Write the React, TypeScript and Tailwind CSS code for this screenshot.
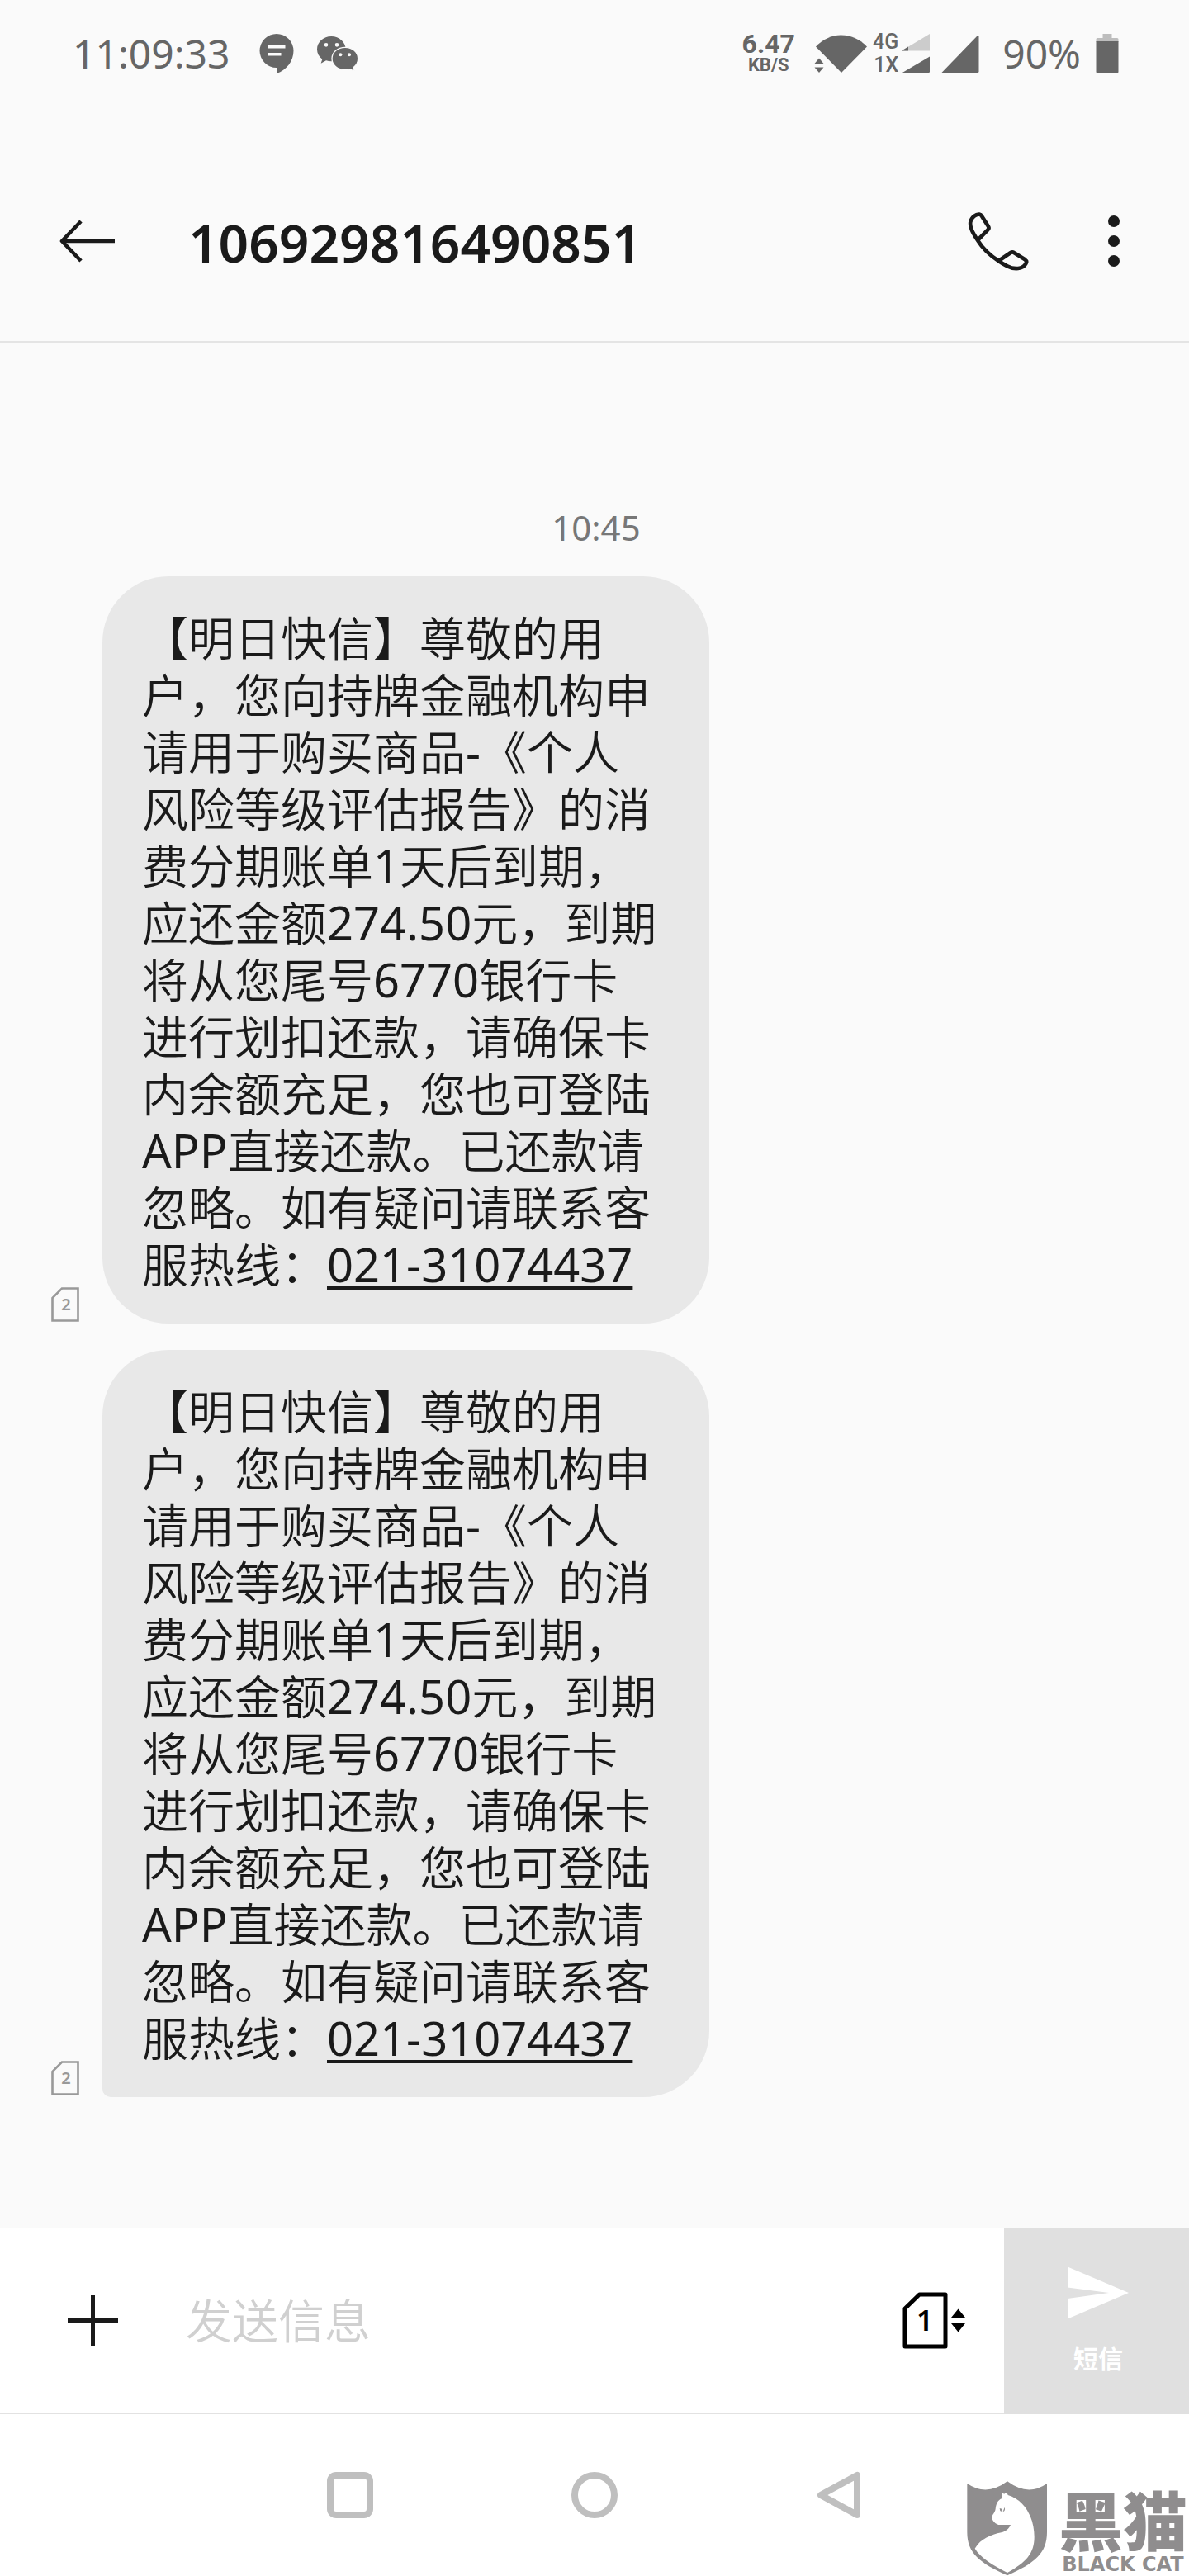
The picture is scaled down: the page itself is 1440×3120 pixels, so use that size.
import { type ReactNode } from "react";

const messages = [
  { id: 1, sim: 2, phone: "021-31074437", last: false },
  { id: 2, sim: 2, phone: "021-31074437", last: true },
];

const body =
  "【明日快信】尊敬的用户，您向持牌金融机构申请用于购买商品-《个人风险等级评估报告》的消费分期账单1天后到期，应还金额274.50元，到期将从您尾号6770银行卡进行划扣还款，请确保卡内余额充足，您也可登陆APP直接还款。已还款请忽略。如有疑问请联系客服热线：";

function StatusBar() {
  return (
    <div className="flex h-[130px] items-center justify-between pl-[88px] pr-[85px] text-[#666666]">
      <div className="flex items-center">
        <span className="text-[48px] leading-[64px]">11:09:33</span>
        <svg className="ml-9 h-12 w-[42px]" viewBox="0 0 42 48" fill="currentColor" aria-hidden="true">
          <path d="M21 0a20.500 20.500 0 0 0 0 41v7c12-4 20.500-15 20.500-27.500A20.500 20.500 0 0 0 21 0z" />
          <path d="M10.500 14h21v3.500h-21zM10.500 23h16v3.500h-16z" fill="#fafafa" />
        </svg>
        <svg className="ml-7 h-[42px] w-[50px]" viewBox="0 0 150 126" fill="currentColor" aria-hidden="true">
          <path d="M52 0C23 0 0 21 0 47c0 15 7 27 19 36l-5 15 19-10c6 2 12 3 19 3 29 0 52-19 52-44S81 0 52 0z" />
          <path
            d="M102 40c-27 0-48 18-48 41s21 41 48 41c6 0 12-1 17-3l17 8-4-14c11-8 17-19 17-32 0-23-20-41-47-41z"
            stroke="#fafafa"
            strokeWidth="4"
          />
          <g fill="#fafafa">
            <circle cx="33" cy="31" r="7" />
            <circle cx="72" cy="31" r="7" />
            <circle cx="85" cy="67" r="6" />
            <circle cx="117" cy="67" r="6" />
          </g>
        </svg>
      </div>
      <div className="flex items-center">
        <div className="flex flex-col items-center font-[Roboto] font-bold">
          <span className="text-[32px] leading-7">6.47</span>
          <span className="text-[22px] leading-6">KB/S</span>
        </div>
        <svg className="ml-[22px] h-12 w-[66px]" viewBox="0 0 66 48" fill="currentColor" aria-hidden="true">
          <path d="M34 47L3 15.500C12 6 23 1.500 34 1.500S56 6 65 15.500z" />
          <path d="M0 36l8-8 8 8v4l-8 8-8-8z" fill="#fafafa" />
          <path d="M1.500 36L7 29.500l5.500 6.500zM1.500 40.500h11L7 47z" />
        </svg>
        <div className="ml-[6px] flex flex-col items-end font-[Roboto] text-[25px] leading-7 font-medium">
          <span>4G</span>
          <span>1X</span>
        </div>
        <svg className="ml-1 h-12 w-[94px]" viewBox="0 0 94 48" fill="currentColor" aria-hidden="true">
          <path d="M0 20.500L34 0v20.500z" fill="#cccccc" />
          <path d="M0 20.500L8 15.500v5z" />
          <path d="M0 47.500L34 27.500v18a2 2 0 0 1-2 2z" />
          <path d="M48 47.500L92 2q1.500-1 1.500 1v42.500a2 2 0 0 1-2 2z" />
        </svg>
        <span className="ml-7 text-[48px] leading-[64px]">90%</span>
        <svg className="ml-[18px] h-12 w-[28px]" viewBox="0 0 28 48" fill="currentColor" aria-hidden="true">
          <path d="M8.500 0h11v5H26q1.500 0 1.500 1.500V10H.5V6.500Q.5 5 2 5h6.500z" fill="#bdbdbd" />
          <path d="M.5 9h27v37a2 2 0 0 1-2 2h-23a2 2 0 0 1-2-2z" />
        </svg>
      </div>
    </div>
  );
}

function Header() {
  return (
    <header className="mt-10 flex h-[245px] items-center border-b-2 border-[#e4e4e4] pl-[72px] pr-[84px] text-[#1a1a1a]">
      <button type="button" aria-label="返回">
        <svg className="h-[52px] w-[68px]" viewBox="0 0 68 52" fill="none" stroke="currentColor" strokeWidth="4.600" aria-hidden="true">
          <path d="M67 26H3M26 2L3 26l23 24" strokeLinejoin="round" />
        </svg>
      </button>
      <h1 className="ml-[88px] flex-1 pt-1 text-[64px] leading-[80px] font-semibold">106929816490851</h1>
      <button type="button" aria-label="拨打电话">
        <svg
          className="h-[72px] w-[74px]"
          viewBox="0 0 222 216"
          fill="none"
          stroke="currentColor"
          strokeWidth="14"
          strokeLinejoin="round"
          aria-hidden="true"
        >
          <path d="M36 105C20 80 6 58 10 38 14 20 30 10 42 11q6 1 9 6l24 38q4 7-2 12zM36 105C54 134 84 162 112 180l44-30q6-4 12 0l40 25q9 6 3 15C200 210 170 212 144 199c-12-6-22-12-32-19" />
        </svg>
      </button>
      <button type="button" aria-label="更多" className="ml-[96px]">
        <svg className="h-[64px] w-[14px]" viewBox="0 0 14 64" fill="currentColor" aria-hidden="true">
          <circle cx="7" cy="8" r="7" />
          <circle cx="7" cy="32" r="7" />
          <circle cx="7" cy="56" r="7" />
        </svg>
      </button>
    </header>
  );
}

function SimBadge({ sim }: { sim: number }) {
  return (
    <svg className="h-[42px] w-[34px]" viewBox="0 0 34 42" role="img" aria-label={`SIM ${sim}`}>
      <path d="M13 1.500h19.500v39h-31V13z" fill="none" stroke="#999999" strokeWidth="2.600" />
      <text x="18" y="28" textAnchor="middle" fontSize="20" fontWeight="600" fill="#999999">
        {sim}
      </text>
    </svg>
  );
}

// Latin runs get the regular weight, Chinese stays demi-light
function MixedText({ text }: { text: string }) {
  return text.split(/([A-Z\d.-]+)/).map((part, i) =>
    i % 2 === 1 ? (
      <span key={i} className="font-normal">
        {part}
      </span>
    ) : (
      part
    )
  );
}

function Bubble({ sim, phone, last }: { sim: number; phone: string; last: boolean }) {
  return (
    <li className="flex items-end gap-7 pl-[62px]">
      <div className="pb-[2px]">
        <SimBadge sim={sim} />
      </div>
      <div
        className={`w-[735px] rounded-[80px] bg-[#e8e8e8] pt-[40px] pb-[37px] pl-12 text-[56px] leading-[69px] font-[350] text-[#1a1a1a] ${last ? "rounded-bl-[10px]" : ""}`}
      >
        <p className="max-w-[628px]">
          <MixedText text={body} />
          <a href={`tel:${phone}`} className="font-normal whitespace-nowrap underline decoration-4 underline-offset-5">
            {phone}
          </a>
        </p>
      </div>
    </li>
  );
}

function Composer() {
  return (
    <form className="flex h-[226px] bg-white" onSubmit={(e) => e.preventDefault()}>
      <div className="flex flex-1 items-center border-b-2 border-[#e2e2e2] pl-[82px] pr-[46px]">
        <button type="button" aria-label="添加附件">
          <svg className="size-[61px]" viewBox="0 0 61 61" stroke="#1a1a1a" strokeWidth="5" aria-hidden="true">
            <path d="M30.500 0v61M0 30.500h61" />
          </svg>
        </button>
        <input
          type="text"
          aria-label="发送信息"
          placeholder="发送信息"
          className="ml-[82px] h-20 min-w-0 flex-1 bg-transparent text-[56px] font-[350] outline-none placeholder:text-[#d0d0d0]"
        />
        <button type="button" aria-label="切换 SIM 卡">
          <svg className="h-[69px] w-[77px]" viewBox="0 0 77 69" aria-hidden="true">
            <path d="M20.500 3H52v63H3V20z" fill="none" stroke="#000" strokeWidth="5" strokeLinejoin="round" />
            <text x="27" y="47" textAnchor="middle" fontSize="35" fontWeight="600">
              1
            </text>
            <path d="M59 31l8.500-10.500L76 31zM59 38h17l-8.500 10.500z" />
          </svg>
        </button>
      </div>
      <button type="submit" className="flex w-[224px] flex-col items-center justify-center gap-7 bg-[#e0e0e0] pl-1 text-white">
        <svg className="h-16 w-[74px]" viewBox="0 0 74 64" fill="currentColor" aria-hidden="true">
          <path d="M0 .5L74 32 0 63.500V39l50-7-50-6.500z" />
        </svg>
        <span className="text-[30px] leading-10 font-semibold">短信</span>
      </button>
    </form>
  );
}

function NavButton({ label, children }: { label: string; children: ReactNode }) {
  return (
    <button type="button" aria-label={label}>
      <svg className="size-[58px]" viewBox="0 0 58 58" fill="none" stroke="#bfbfbf" strokeWidth="8" strokeLinejoin="round" aria-hidden="true">
        {children}
      </svg>
    </button>
  );
}

function Watermark() {
  return (
    <div className="absolute right-0 bottom-0 flex items-end gap-3 pr-[2px] text-[#8f8d8e]">
      <svg className="h-[116px] w-[100px]" viewBox="60 72 300 348" fill="currentColor" aria-hidden="true">
        <path d="M64 84Q135 132 210 76q75 56 144 8v176c0 78-44 112-144 158C110 372 64 338 64 260z" />
        <path
          d="M189 114l9 8 10-6 4 10c62 18 96 84 96 152 0 60-30 92-98 130-46-24-96-52-118-88 22-36 58-50 96-58 16-4 28-14 34-28h-44c-10-3-23-14-25-28 3-10 12-16 14-30 2-18 8-32 24-38z"
          fill="#fff"
        />
        <path d="M182 174l8 2-2 10q-6-3-6-12zM200 170l-6 16q10-3 6-16z" />
      </svg>
      <div className="flex flex-col items-center">
        <span className="mb-1 font-['Noto_Sans_CJK_SC'] text-[78px] leading-[76px] font-black">黑猫</span>
        <span className="font-[DejaVu_Sans] text-[24px] leading-7 font-bold">BLACK CAT</span>
      </div>
    </div>
  );
}

export default function App() {
  return (
    <div className="relative flex min-h-screen flex-col bg-[#fafafa] font-['Noto_Sans','Noto_Sans_CJK_SC',sans-serif]">
      <StatusBar />
      <Header />
      <main className="flex-1 pt-[194px] pb-[156px]">
        <time className="block pl-1 text-center text-[42px] leading-[60px] text-[#777777]">10:45</time>
        <ul className="mt-[29px] flex flex-col gap-8">
          {messages.map((m) => (
            <Bubble key={m.id} sim={m.sim} phone={m.phone} last={m.last} />
          ))}
        </ul>
      </main>
      <Composer />
      <nav className="flex h-[196px] items-center justify-center gap-[238px] bg-white">
        <NavButton label="最近任务">
          <rect x="5" y="5" width="48" height="48" rx="7" />
        </NavButton>
        <NavButton label="主屏幕">
          <circle cx="29" cy="29" r="24" />
        </NavButton>
        <NavButton label="返回">
          <path d="M51 5v48L7 29z" />
        </NavButton>
      </nav>
      <Watermark />
    </div>
  );
}
